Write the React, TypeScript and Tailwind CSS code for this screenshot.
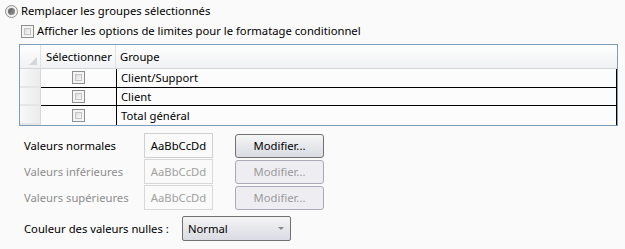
import React from "react";

const rows = ["Client/Support", "Client", "Total général"];

const Check = ({ className = "" }: { className?: string }) => (
  <span
    className={`inline-block w-[13px] h-[13px] border border-[#8e8f8f] bg-[#f4f4f4] p-[2px] ${className}`}
  >
    <span className="block w-full h-full border border-[#c4c4c4] bg-gradient-to-br from-[#dcdcdc] to-[#f8f8f8]" />
  </span>
);

const Radio = () => (
  <span className="inline-flex items-center justify-center w-[13px] h-[13px] rounded-full border border-[#8e8f8f] bg-gradient-to-br from-[#e6e6e6] to-[#fbfbfb]">
    <span className="block w-[7px] h-[7px] rounded-full bg-gradient-to-br from-[#5a5a5a] to-[#9a9a9a]" />
  </span>
);

const FormatRow = ({ label, enabled }: { label: string; enabled: boolean }) => (
  <div className="flex items-center h-[25px]">
    <div className={`w-[120px] ${enabled ? "text-black" : "text-[#8d8d8d]"}`}>{label}</div>
    <div
      className={`w-[69px] h-[25px] flex items-center justify-center border ${
        enabled ? "border-[#d0d0d0] text-black" : "border-[#d8d8d8] text-[#a0a0a0]"
      }`}
    >
      AaBbCcDd
    </div>
    <button
      className={`ml-[22px] w-[89px] h-[24px] rounded-[3px] border flex items-center justify-center ${
        enabled
          ? "border-[#707070] bg-gradient-to-b from-[#f6f6f6] via-[#e6e8ec] to-[#d9dce2] text-black"
          : "border-[#a9a9b8] bg-[#eeeef2] text-[#9a9a9a]"
      }`}
    >
      Modifier...
    </button>
  </div>
);

export default function App() {
  return (
    <div className="w-[625px] h-[249px] bg-[#fafafa] text-[11.25px] leading-none text-black font-['Segoe_UI','Noto_Sans',sans-serif] overflow-hidden">
      <div className="flex items-center gap-[3px] pl-[5px] pt-[2px] h-[18px] box-content">
        <Radio />
        <span>Remplacer les groupes sélectionnés</span>
      </div>
      <div className="flex items-center gap-[3px] pl-[21px] mt-[2px] h-[18px]">
        <Check />
        <span>Afficher les options de limites pour le formatage conditionnel</span>
      </div>

      <div className="ml-[19px] mt-[4px] w-[599px] h-[82px] border border-[#7f9db9] bg-[#fcfcfc] flex flex-col">
        <div className="flex h-[24px] bg-gradient-to-b from-[#ffffff] to-[#f0f1f3] border-b border-[#d5d5d5]">
          <div className="w-[21px] relative border-r border-[#e2e2e2]">
            <svg width="8" height="8" viewBox="0 0 8 8" className="absolute right-[3px] bottom-[3px]">
              <path d="M8 0 L8 8 L0 8 Z" fill="#d6d6d6" />
            </svg>
          </div>
          <div className="w-[75px] flex items-center pl-[5px] border-r border-[#e2e2e2]">Sélectionner</div>
          <div className="flex-1 flex items-center pl-[4px]">Groupe</div>
        </div>
        {rows.map((r, i) => (
          <div key={r} className="flex flex-1">
            <div className="w-[21px] border-r border-[#d8d8d8] border-b-2 border-b-[#e6e6e8] bg-gradient-to-r from-[#f8f8f8] to-[#ececec]" />
            <div
              className={`flex flex-1 border-r border-black ${i < rows.length - 1 ? "border-b border-black" : ""}`}
            >
              <div className="w-[75px] flex items-center justify-center">
                <Check />
              </div>
              <div className="flex-1 flex items-center pl-[4px] border-l border-black">{r}</div>
            </div>
          </div>
        ))}
      </div>

      <div className="pl-[24px] mt-[7px] flex flex-col gap-[1px]">
        <FormatRow label="Valeurs normales" enabled />
        <FormatRow label="Valeurs inférieures" enabled={false} />
        <FormatRow label="Valeurs supérieures" enabled={false} />
      </div>

      <div className="pl-[24px] mt-[6px] flex items-center h-[25px]">
        <span className="w-[158px]">Couleur des valeurs nulles :</span>
        <div className="w-[109px] h-[25px] rounded-[2px] border border-[#707070] bg-gradient-to-b from-[#f4f4f4] to-[#dadbe3] flex items-center pl-[5px] pr-[6px]">
          <span className="flex-1">Normal</span>
          <svg width="6" height="4" viewBox="0 0 6 4">
            <path d="M0 0 L6 0 L3 3 Z" fill="#8a8a8a" />
          </svg>
        </div>
      </div>
    </div>
  );
}
